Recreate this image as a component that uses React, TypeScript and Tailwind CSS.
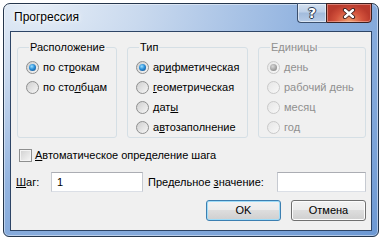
import React from 'react';

type RadioProps = { checked?: boolean; disabled?: boolean };

function Radio({ checked, disabled }: RadioProps) {
  return (
    <span
      className={`flex h-[13px] w-[13px] shrink-0 items-center justify-center rounded-full border ${
        disabled
          ? 'border-[#c9c9c9] bg-[linear-gradient(135deg,#e6e6e6,#f8f8f8)]'
          : 'border-[#8e8f8f] bg-[linear-gradient(135deg,#cfcfcf,#f6f6f6)]'
      }`}
    >
      {checked && (
        <span
          className={`h-[7px] w-[7px] rounded-full ${
            disabled
              ? 'bg-[radial-gradient(circle_at_40%_35%,#d8d8d8_0%,#a3a3a3_55%,#7a7a7a_100%)]'
              : 'bg-[radial-gradient(circle_at_40%_35%,#9fe0ff_0%,#2b8fd8_45%,#0c3f7c_100%)]'
          }`}
        />
      )}
    </span>
  );
}

function Option({ children, checked, disabled }: { children: React.ReactNode; checked?: boolean; disabled?: boolean }) {
  return (
    <div className={`flex h-[20px] items-center gap-[4px] ${disabled ? 'text-[#8f8f8f]' : 'text-black'}`}>
      <Radio checked={checked} disabled={disabled} />
      <span>{children}</span>
    </div>
  );
}

function Group({ title, width, disabled, children }: { title: string; width: string; disabled?: boolean; children: React.ReactNode }) {
  return (
    <fieldset className={`${width} h-[97px] rounded-[3px] border border-[#d5dfe5] pl-[8px]`}>
      <legend className={`ml-[3px] px-[1px] leading-[13px] ${disabled ? 'text-[#8f8f8f]' : 'text-black'}`}>{title}</legend>
      <div className="mt-[3px] flex flex-col">{children}</div>
    </fieldset>
  );
}

function Button({ children, focused }: { children: React.ReactNode; focused?: boolean }) {
  return (
    <button
      className={`flex h-[21px] w-[75px] items-center justify-center rounded-[3px] border bg-[linear-gradient(#f2f2f2_0%,#ebebeb_50%,#dddddd_50%,#cfcfcf_100%)] text-black ${
        focused
          ? 'border-[#3c7fb1] shadow-[inset_0_0_0_1px_#9fdcf8]'
          : 'border-[#707070] shadow-[inset_0_0_0_1px_#fcfcfc]'
      }`}
    >
      {children}
    </button>
  );
}

export default function App() {
  return (
    <div className="h-[241px] w-[384px] overflow-hidden bg-white pl-[3px] pt-[3px] font-['Liberation_Sans',Arial,sans-serif] text-[11px] leading-[13px]">
      <div className="flex h-[234px] w-[376px] flex-col rounded-t-[7px] rounded-b-[6px] border border-[#25364c] bg-[radial-gradient(ellipse_at_8%_0%,#e6eef7_0%,#c9d9ee_22%,#93b4e0_55%,#6c98d3_100%)] px-[6px] shadow-[inset_0_0_0_1px_rgba(255,255,255,0.45)]">
        {/* Title bar */}
        <div className="flex h-[27px] shrink-0 items-start justify-between">
          <span className="mt-[6px] ml-[2px] px-[2px] text-[12px] leading-[15px] text-black [text-shadow:0_0_6px_#fff,0_0_3px_#fff]">
            Прогрессия
          </span>
          <div className="-mt-px flex h-[20px]">
            <div className="flex w-[29px] items-center justify-center rounded-bl-[4px] border border-r-0 border-[#3b4f6d] bg-[linear-gradient(#d3e0f0_0%,#bccfe8_45%,#a2bbdc_50%,#b6cbe7_100%)] shadow-[inset_0_0_0_1px_rgba(255,255,255,0.5)]">
              <span className="font-['DejaVu_Sans',sans-serif] text-[14px] font-bold leading-[14px] text-white [text-shadow:0_0_1px_#2a3a52,1px_0_0_#2a3a52,-1px_0_0_#2a3a52,0_1px_0_#2a3a52,0_-1px_0_#2a3a52]">
                ?
              </span>
            </div>
            <div className="flex w-[46px] items-center justify-center rounded-br-[4px] border border-[#3b2020] bg-[radial-gradient(ellipse_at_50%_100%,#f0a070_0%,#d2513b_45%,#b93a2c_70%),linear-gradient(#e6a79b,#c8503f)] shadow-[inset_0_0_0_1px_rgba(255,210,200,0.45)]">
              <svg width="14" height="11" viewBox="0 0 14 11">
                <path d="M3 2 L11 9 M11 2 L3 9" stroke="#3a1d1a" strokeWidth="4.2" strokeLinecap="round" fill="none" />
                <path d="M3 2 L11 9 M11 2 L3 9" stroke="#ffffff" strokeWidth="2.4" strokeLinecap="round" fill="none" />
              </svg>
            </div>
          </div>
        </div>

        {/* Client area */}
        <div className="flex h-[200px] flex-col border border-[#2e4566] bg-[#f0f0f0] pl-[6px] pr-[5px]">
          <div className="mt-[9px] flex gap-[10px]">
            <Group title="Расположение" width="w-[100px]">
              <Option checked>
                по ст<span className="underline">р</span>окам
              </Option>
              <Option>
                по сто<span className="underline">л</span>бцам
              </Option>
            </Group>
            <Group title="Тип" width="w-[121px]">
              <Option checked>
                ар<span className="underline">и</span>фметическая
              </Option>
              <Option>
                <span className="underline">г</span>еометрическая
              </Option>
              <Option>
                дат<span className="underline">ы</span>
              </Option>
              <Option>
                а<span className="underline">в</span>тозаполнение
              </Option>
            </Group>
            <Group title="Единицы" width="w-[108px]" disabled>
              <Option checked disabled>день</Option>
              <Option disabled>рабочий день</Option>
              <Option disabled>месяц</Option>
              <Option disabled>год</Option>
            </Group>
          </div>

          <div className="mt-[11px] flex h-[13px] items-center gap-[3px] pl-[2px]">
            <span className="h-[13px] w-[13px] shrink-0 border border-[#8e8f8f] bg-[linear-gradient(135deg,#d0d0d0,#f7f7f7)] shadow-[inset_0_0_0_1px_#f4f4f4]" />
            <span>
              <span className="underline">А</span>втоматическое определение шага
            </span>
          </div>

          <div className="mt-[10px] flex h-[20px] items-center">
            <span className="ml-[-1px] w-[35px]">
              <span className="underline">Ш</span>аг:
            </span>
            <div className="flex h-[20px] w-[92px] items-center border border-[#abadb3] border-b-[#dbdfe6] border-x-[#c6cad1] bg-white pl-[5px]">1</div>
            <span className="ml-[5px] w-[129px]">
              Предельное <span className="underline">з</span>начение:
            </span>
            <div className="h-[20px] w-[89px] border border-[#abadb3] border-b-[#dbdfe6] border-x-[#c6cad1] bg-white" />
          </div>

          <div className="mt-[8px] flex justify-end gap-[10px]">
            <Button focused>OK</Button>
            <Button>Отмена</Button>
          </div>
        </div>
      </div>
    </div>
  );
}
